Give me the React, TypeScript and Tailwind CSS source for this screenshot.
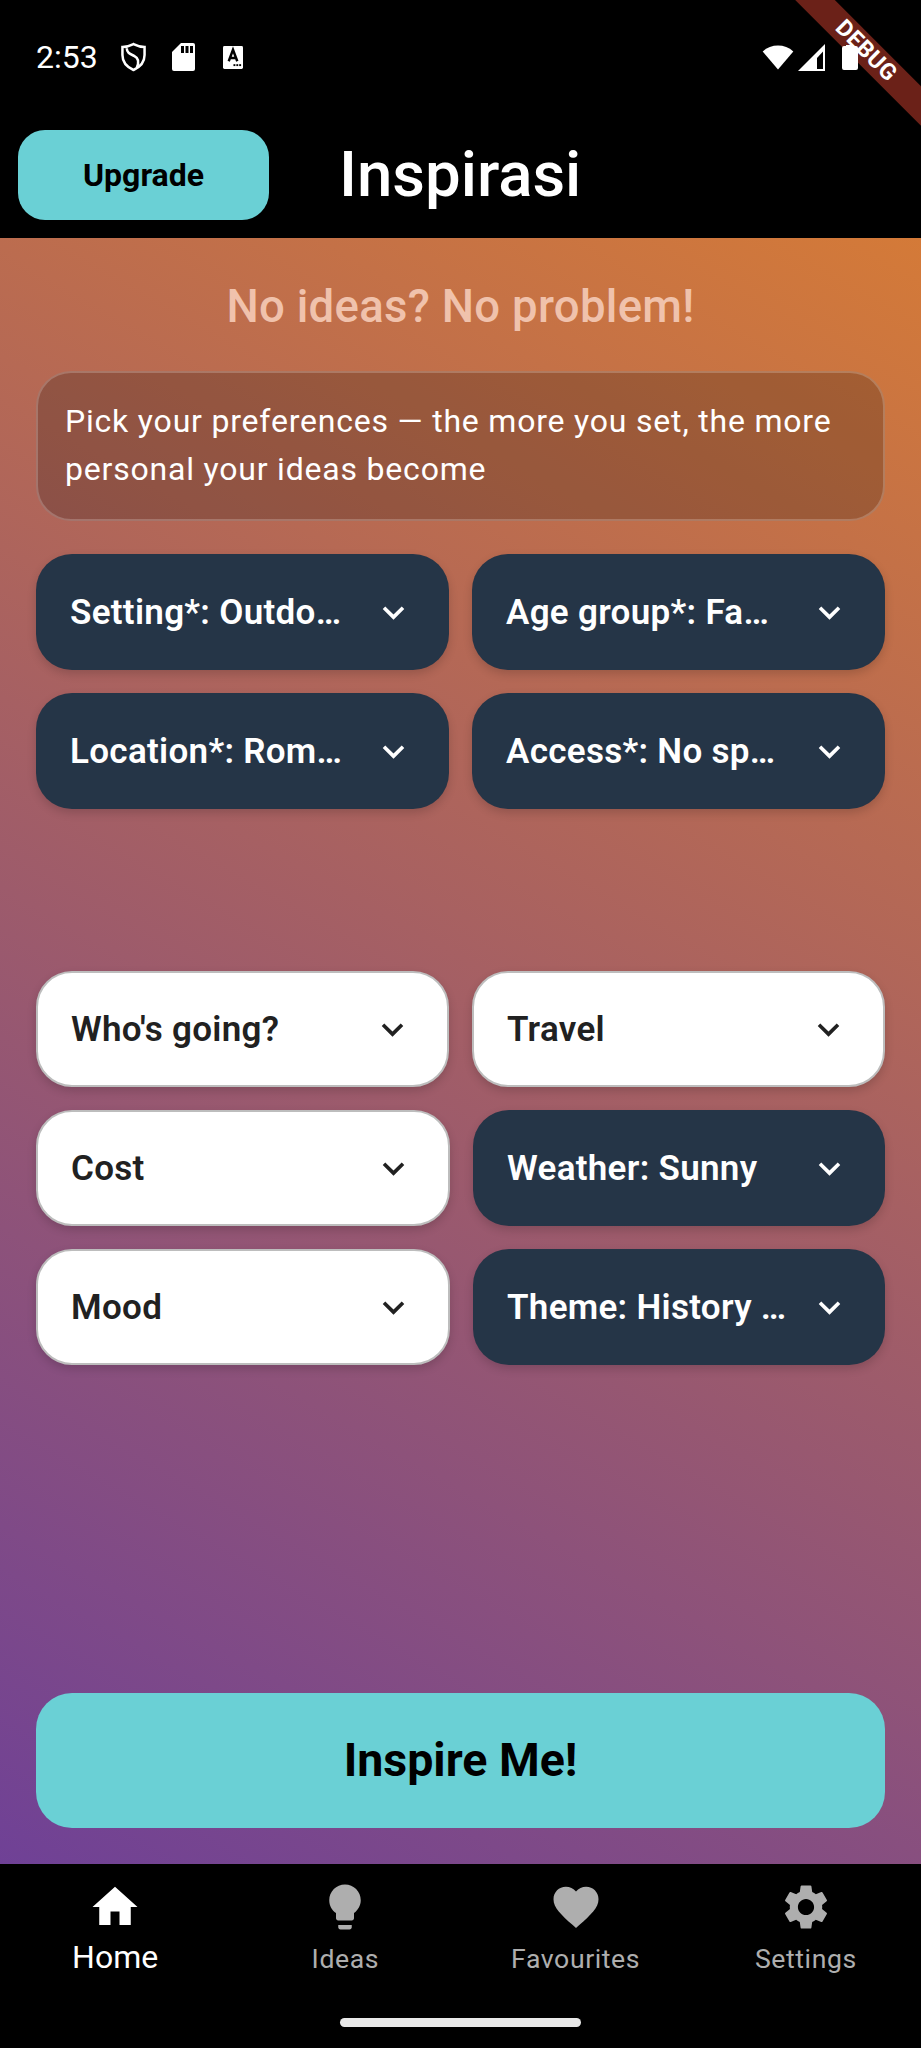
import React from "react";
import { MdHome, MdLightbulb, MdFavorite, MdSettings, MdKeyboardArrowDown } from "react-icons/md";

const Pill = ({ label, filled }: { label: string; filled?: boolean }) => (
  <div
    className={
      filled
        ? "flex h-[116px] min-w-0 flex-1 items-center rounded-[36px] bg-[#253547] pl-[34px] pr-[34px] text-white shadow-[0_4px_10px_rgba(0,0,0,0.16)]"
        : "flex h-[116px] min-w-0 flex-1 items-center rounded-[36px] border-2 border-[#bdbdbd] bg-white pl-[33px] pr-[33px] text-[#212121] shadow-[0_4px_10px_rgba(0,0,0,0.16)]"
    }
  >
    <span className="min-w-0 flex-1 text-[35px] leading-none font-semibold tracking-[0.3px] whitespace-nowrap">{label}</span>
    <MdKeyboardArrowDown className="shrink-0 text-[43px]" />
  </div>
);

const NavItem = ({ icon, label, active }: { icon: React.ReactNode; label: string; active?: boolean }) => (
  <div className={active ? "flex flex-1 flex-col items-center text-white" : "flex flex-1 flex-col items-center text-[#aeaeae]"}>
    <div className="flex h-[54px] items-center justify-center text-[54px]">{icon}</div>
    <span className={active ? "mt-[3px] text-[32px] leading-[40px]" : "mt-[8px] text-[26.6px] leading-[34px] tracking-[0.6px]"}>{label}</span>
  </div>
);

const StatusBar = () => (
  <div className="relative z-10 flex h-[130px] items-start pr-[63px] pl-[36px] pt-[39px] text-white">
    <span className="w-[60px] text-[32px] leading-[36px]">2:53</span>
    <div className="flex h-[36px] items-center">
      <svg className="ml-[25px]" width="25" height="30" viewBox="0 0 26 30" fill="none" stroke="white" strokeWidth="2.6">
        <path d="M13 1.5 C17 3.5 21 4.5 24.5 4.5 V13 C24.5 20 20 25.5 13 28.5 C6 25.5 1.5 20 1.5 13 V4.5 C5 4.5 9 3.5 13 1.5 Z" />
        <path d="M6 6 C6 11 10 12 14 14 C18 16 19 20 16.5 26" />
      </svg>
      <svg className="ml-[26px]" width="23" height="28" viewBox="0 0 23 28" fill="white">
        <path d="M9 0 H21 a2 2 0 0 1 2 2 V26 a2 2 0 0 1 -2 2 H2 a2 2 0 0 1 -2 -2 V9 Z" />
        <rect x="9" y="3" width="3" height="7" fill="black" />
        <rect x="13.5" y="3" width="3" height="7" fill="black" />
        <rect x="18" y="3" width="3" height="7" fill="black" />
      </svg>
      <svg className="ml-[28px]" width="20" height="23" viewBox="0 0 21 24">
        <rect width="21" height="24" rx="1.5" fill="white" />
        <path d="M6 16 L10.5 4 L15 16 M7.5 12.5 H13.5" stroke="black" strokeWidth="2.6" fill="none" />
        <rect x="11" y="19" width="2" height="2" fill="black" />
        <rect x="14" y="19" width="2" height="2" fill="black" />
        <rect x="17" y="19" width="2" height="2" fill="black" />
      </svg>
    </div>
    <div className="ml-auto flex h-[36px] items-center">
      <svg width="32" height="26" viewBox="0 0 34 28" fill="white">
        <path d="M17 27.5 L0.5 8 C9.5 -0.5 24.5 -0.5 33.5 8 Z" />
      </svg>
      <svg className="ml-[4px]" width="27" height="27" viewBox="0 0 27 27">
        <path d="M27 0 V27 H0 Z" fill="white" />
        <path d="M19 14 V25 H25 V7.5 Z" fill="black" />
      </svg>
      <svg className="ml-[17px]" width="16" height="25" viewBox="0 0 16 25" fill="white">
        <path d="M4 0 H12 V1 H14 a2 2 0 0 1 2 2 V23 a2 2 0 0 1 -2 2 H2 a2 2 0 0 1 -2 -2 V3 a2 2 0 0 1 2 -2 H4 Z" />
      </svg>
    </div>
  </div>
);

export default function App() {
  return (
    <div className="relative flex h-[2048px] w-[921px] flex-col overflow-hidden bg-black font-['Roboto',sans-serif]">
      <StatusBar />

      {/* App bar */}
      <div className="flex h-[108px] items-start pl-[18px]">
        <div className="flex h-[90px] w-[251px] items-center justify-center rounded-[27px] bg-[#6AD0D5] text-[32px] font-bold text-black">
          Upgrade
        </div>
        <h1 className="ml-[70px] text-[63.5px] leading-[90px] font-medium text-white">Inspirasi</h1>
      </div>

      {/* Body */}
      <div className="flex flex-1 flex-col bg-[linear-gradient(29.5deg,#6F4196,#D47A38)] px-[36px]">
        <h2 className="mt-[43px] text-center text-[45.5px] leading-[52px] font-medium tracking-[0.3px] text-[#F0C2AC]">
          No ideas? No problem!
        </h2>
        <div className="mt-[38px] rounded-[35px] border-2 border-white/20 bg-black/20 px-[27px] pt-[24px] pb-[26px] text-[32px] leading-[48px] tracking-[0.8px] text-white">
          Pick your preferences — the more you set, the more personal your ideas become
        </div>

        <div className="mt-[33px] flex flex-col gap-[23px]">
          <div className="flex gap-[23px]">
            <Pill filled label="Setting*: Outdo…" />
            <Pill filled label="Age group*: Fa…" />
          </div>
          <div className="flex gap-[23px]">
            <Pill filled label="Location*: Rom…" />
            <Pill filled label="Access*: No sp…" />
          </div>
        </div>

        <div className="mt-[162px] flex flex-col gap-[23px]">
          <div className="flex gap-[23px]">
            <Pill label="Who's going?" />
            <Pill label="Travel" />
          </div>
          <div className="flex gap-[23px]">
            <Pill label="Cost" />
            <Pill filled label="Weather: Sunny" />
          </div>
          <div className="flex gap-[23px]">
            <Pill label="Mood" />
            <Pill filled label="Theme: History …" />
          </div>
        </div>

        <div className="mt-auto mb-[36px] flex h-[135px] items-center justify-center rounded-[36px] bg-[#6AD0D5] text-[46.5px] font-bold text-black">
          Inspire Me!
        </div>
      </div>

      {/* Bottom nav */}
      <div className="relative h-[184px] bg-black">
        <div className="flex pt-[16px]">
          <NavItem active icon={<MdHome />} label="Home" />
          <NavItem icon={<MdLightbulb />} label="Ideas" />
          <NavItem icon={<MdFavorite />} label="Favourites" />
          <NavItem icon={<MdSettings />} label="Settings" />
        </div>
        <div className="absolute bottom-[21px] left-[340px] h-[9px] w-[241px] rounded-full bg-[#e8e8e8]" />
      </div>

      {/* Debug banner */}
      <div className="absolute top-[37px] right-[-45px] flex h-[28px] w-[200px] rotate-45 items-center justify-center bg-[#6B2118] text-[23px] font-bold tracking-[0.5px] text-white">
        DEBUG
      </div>
    </div>
  );
}
